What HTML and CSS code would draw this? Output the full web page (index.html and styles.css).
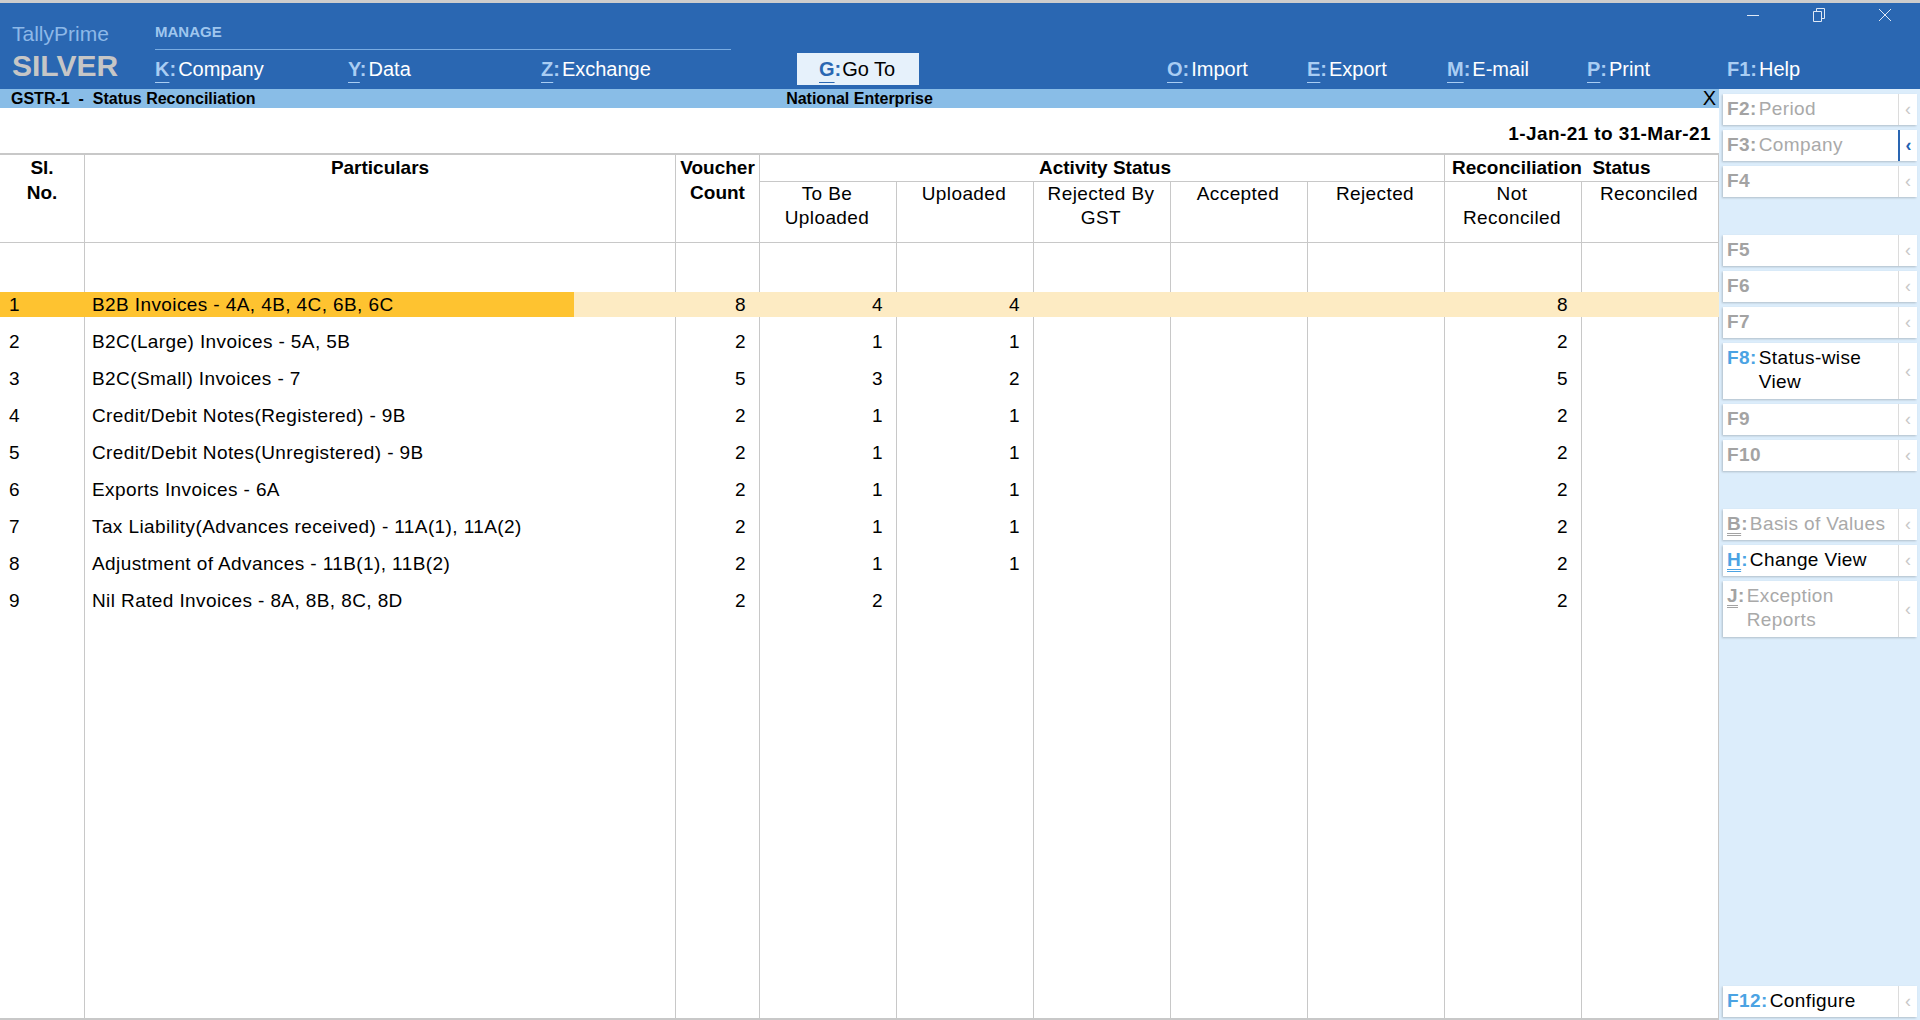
FILE: index.html
```html
<!DOCTYPE html>
<html>
<head>
<meta charset="utf-8">
<title>TallyPrime - GSTR-1 Status Reconciliation</title>
<link rel="stylesheet" href="styles.css">
</head>
<body>
<div class="app">
  <div class="chrome-top"></div>
  <header class="topbar">
    <div class="brand">
      <div class="product">TallyPrime</div>
      <div class="edition">SILVER</div>
    </div>
    <div class="nav">
      <div class="nav-top">
        <div class="manage">MANAGE</div>
        <div class="winctl">
          <span class="wc"><svg width="14" height="14" viewBox="0 0 14 14"><path d="M1 7.5H13" stroke="#dfe9f6" stroke-width="1" fill="none"/></svg></span>
          <span class="wc"><svg width="14" height="14" viewBox="0 0 14 14"><path d="M4.5 3.5V0.5H12.5V10.5H9.5M1.5 3.5H9.5V13.5H1.5Z" stroke="#dfe9f6" stroke-width="1" fill="none"/></svg></span>
          <span class="wc"><svg width="14" height="14" viewBox="0 0 14 14"><path d="M1 1L13 13M13 1L1 13" stroke="#dfe9f6" stroke-width="1" fill="none"/></svg></span>
        </div>
      </div>
      <div class="menu">
        <div class="mi w193"><span class="k"><u>K</u>:</span>Company</div>
        <div class="mi w193"><span class="k"><u>Y</u>:</span>Data</div>
        <div class="mi w193"><span class="k"><u>Z</u>:</span>Exchange</div>
        <div class="mi goto"><span class="k"><u>G</u>:</span>Go To</div>
        <div class="mi w140 rfirst"><span class="k"><u>O</u>:</span>Import</div>
        <div class="mi w140"><span class="k"><u>E</u>:</span>Export</div>
        <div class="mi w140"><span class="k"><u>M</u>:</span>E-mail</div>
        <div class="mi w140"><span class="k"><u>P</u>:</span>Print</div>
        <div class="mi"><span class="k">F1:</span>Help</div>
      </div>
    </div>
  </header>

  <div class="content">
    <main class="main">
      <div class="titlebar">
        <span class="t-left">GSTR-1 &nbsp;- &nbsp;Status Reconciliation</span>
        <span class="t-mid">National Enterprise</span>
        <span class="t-close">X</span>
      </div>
      <div class="period">1-Jan-21 to 31-Mar-21</div>

      <div class="table">
        <div class="thead">
          <div class="h hb span2">Sl.<br>No.</div>
          <div class="h hb span2">Particulars</div>
          <div class="h hb span2">Voucher<br>Count</div>
          <div class="h grp">Activity Status</div>
          <div class="h grp grp2">Reconciliation  Status</div>
          <div class="h sub">To Be<br>Uploaded</div>
          <div class="h sub">Uploaded</div>
          <div class="h sub">Rejected By<br>GST</div>
          <div class="h sub">Accepted</div>
          <div class="h sub">Rejected</div>
          <div class="h sub">Not<br>Reconciled</div>
          <div class="h sub">Reconciled</div>
        </div>

        <div class="tbody">
          <div class="row spacer">
            <div class="c"></div><div class="c"></div><div class="c"></div><div class="c"></div><div class="c"></div>
            <div class="c"></div><div class="c"></div><div class="c"></div><div class="c"></div><div class="c"></div>
          </div>

          <div class="row sel">
            <div class="c sl"><div class="v">1</div></div>
            <div class="c pt"><div class="v">B2B Invoices - 4A, 4B, 4C, 6B, 6C</div></div>
            <div class="c num"><div class="v">8</div></div>
            <div class="c num"><div class="v">4</div></div>
            <div class="c num"><div class="v">4</div></div>
            <div class="c num"><div class="v"></div></div>
            <div class="c num"><div class="v"></div></div>
            <div class="c num"><div class="v"></div></div>
            <div class="c num"><div class="v">8</div></div>
            <div class="c num"><div class="v"></div></div>
          </div>

          <div class="row">
            <div class="c sl"><div class="v">2</div></div>
            <div class="c pt"><div class="v">B2C(Large) Invoices - 5A, 5B</div></div>
            <div class="c num"><div class="v">2</div></div>
            <div class="c num"><div class="v">1</div></div>
            <div class="c num"><div class="v">1</div></div>
            <div class="c num"></div><div class="c num"></div><div class="c num"></div>
            <div class="c num"><div class="v">2</div></div>
            <div class="c num"></div>
          </div>

          <div class="row">
            <div class="c sl"><div class="v">3</div></div>
            <div class="c pt"><div class="v">B2C(Small) Invoices - 7</div></div>
            <div class="c num"><div class="v">5</div></div>
            <div class="c num"><div class="v">3</div></div>
            <div class="c num"><div class="v">2</div></div>
            <div class="c num"></div><div class="c num"></div><div class="c num"></div>
            <div class="c num"><div class="v">5</div></div>
            <div class="c num"></div>
          </div>

          <div class="row">
            <div class="c sl"><div class="v">4</div></div>
            <div class="c pt"><div class="v">Credit/Debit Notes(Registered) - 9B</div></div>
            <div class="c num"><div class="v">2</div></div>
            <div class="c num"><div class="v">1</div></div>
            <div class="c num"><div class="v">1</div></div>
            <div class="c num"></div><div class="c num"></div><div class="c num"></div>
            <div class="c num"><div class="v">2</div></div>
            <div class="c num"></div>
          </div>

          <div class="row">
            <div class="c sl"><div class="v">5</div></div>
            <div class="c pt"><div class="v">Credit/Debit Notes(Unregistered) - 9B</div></div>
            <div class="c num"><div class="v">2</div></div>
            <div class="c num"><div class="v">1</div></div>
            <div class="c num"><div class="v">1</div></div>
            <div class="c num"></div><div class="c num"></div><div class="c num"></div>
            <div class="c num"><div class="v">2</div></div>
            <div class="c num"></div>
          </div>

          <div class="row">
            <div class="c sl"><div class="v">6</div></div>
            <div class="c pt"><div class="v">Exports Invoices - 6A</div></div>
            <div class="c num"><div class="v">2</div></div>
            <div class="c num"><div class="v">1</div></div>
            <div class="c num"><div class="v">1</div></div>
            <div class="c num"></div><div class="c num"></div><div class="c num"></div>
            <div class="c num"><div class="v">2</div></div>
            <div class="c num"></div>
          </div>

          <div class="row">
            <div class="c sl"><div class="v">7</div></div>
            <div class="c pt"><div class="v">Tax Liability(Advances received) - 11A(1), 11A(2)</div></div>
            <div class="c num"><div class="v">2</div></div>
            <div class="c num"><div class="v">1</div></div>
            <div class="c num"><div class="v">1</div></div>
            <div class="c num"></div><div class="c num"></div><div class="c num"></div>
            <div class="c num"><div class="v">2</div></div>
            <div class="c num"></div>
          </div>

          <div class="row">
            <div class="c sl"><div class="v">8</div></div>
            <div class="c pt"><div class="v">Adjustment of Advances - 11B(1), 11B(2)</div></div>
            <div class="c num"><div class="v">2</div></div>
            <div class="c num"><div class="v">1</div></div>
            <div class="c num"><div class="v">1</div></div>
            <div class="c num"></div><div class="c num"></div><div class="c num"></div>
            <div class="c num"><div class="v">2</div></div>
            <div class="c num"></div>
          </div>

          <div class="row">
            <div class="c sl"><div class="v">9</div></div>
            <div class="c pt"><div class="v">Nil Rated Invoices - 8A, 8B, 8C, 8D</div></div>
            <div class="c num"><div class="v">2</div></div>
            <div class="c num"><div class="v">2</div></div>
            <div class="c num"></div>
            <div class="c num"></div><div class="c num"></div><div class="c num"></div>
            <div class="c num"><div class="v">2</div></div>
            <div class="c num"></div>
          </div>

          <div class="row filler">
            <div class="c"></div><div class="c"></div><div class="c"></div><div class="c"></div><div class="c"></div>
            <div class="c"></div><div class="c"></div><div class="c"></div><div class="c"></div><div class="c"></div>
          </div>
        </div>
      </div>
    </main>

    <aside class="side">
      <div class="btn"><div class="lbl"><span class="key">F2:</span><span class="txt">Period</span></div><div class="arr">‹</div></div>
      <div class="btn cur"><div class="lbl"><span class="key">F3:</span><span class="txt">Company</span></div><div class="arr">‹</div></div>
      <div class="btn"><div class="lbl"><span class="key">F4</span></div><div class="arr">‹</div></div>
      <div class="spc"></div>
      <div class="btn"><div class="lbl"><span class="key">F5</span></div><div class="arr">‹</div></div>
      <div class="btn"><div class="lbl"><span class="key">F6</span></div><div class="arr">‹</div></div>
      <div class="btn"><div class="lbl"><span class="key">F7</span></div><div class="arr">‹</div></div>
      <div class="btn two on"><div class="lbl"><span class="key">F8:</span><span class="txt">Status-wise<br>View</span></div><div class="arr">‹</div></div>
      <div class="btn"><div class="lbl"><span class="key">F9</span></div><div class="arr">‹</div></div>
      <div class="btn"><div class="lbl"><span class="key">F10</span></div><div class="arr">‹</div></div>
      <div class="spc"></div>
      <div class="btn"><div class="lbl"><span class="key"><u>B</u>:</span><span class="txt">Basis of Values</span></div><div class="arr">‹</div></div>
      <div class="btn on"><div class="lbl"><span class="key"><u>H</u>:</span><span class="txt">Change View</span></div><div class="arr">‹</div></div>
      <div class="btn two"><div class="lbl"><span class="key"><u>J</u>:</span><span class="txt">Exception<br>Reports</span></div><div class="arr">‹</div></div>
      <div class="btn on last"><div class="lbl"><span class="key">F12:</span><span class="txt">Configure</span></div><div class="arr">‹</div></div>
    </aside>
  </div>
</div>
</body>
</html>
```

FILE: styles.css
```css
* { box-sizing: border-box; }
html, body { margin: 0; padding: 0; }
body {
  width: 1920px;
  height: 1020px;
  overflow: hidden;
  background: #ffffff;
  color: #000000;
  font-family: "Liberation Sans", Arial, sans-serif;
}
.app { display: flex; flex-direction: column; height: 1020px; }

/* ---------- window top / header ---------- */
.chrome-top { height: 3px; background: #cdcdcd; flex: none; }
.topbar { height: 86px; flex: none; background: #2a67b2; display: flex; }

.brand { width: 155px; padding-left: 12px; flex: none; }
.product { margin-top: 19px; font-size: 21px; line-height: 24px; color: #8db8e8; }
.edition { margin-top: 5px; font-size: 30px; line-height: 30px; font-weight: bold; color: #c6c6c6; }

.nav { flex: 1; display: flex; flex-direction: column; }
.nav-top { display: flex; align-items: flex-start; }
.manage {
  width: 576px;
  height: 27px;
  margin-top: 20px;
  font-size: 15px;
  line-height: 18px;
  font-weight: bold;
  color: #9fc6ee;
  border-bottom: 1px solid #79ace2;
}
.winctl { margin-left: auto; display: flex; height: 24px; padding-right: 2px; }
.wc { width: 66px; display: flex; align-items: center; justify-content: center; }
.wc svg { display: block; }

.menu { display: flex; margin-top: 3px; height: 32px; font-size: 20px; color: #ffffff; }
.mi { line-height: 32px; white-space: nowrap; flex: none; }
.mi .k { font-weight: bold; color: #a9cdf3; margin-right: 2px; }
.mi .k u { text-decoration: underline; text-underline-offset: 6px; text-decoration-thickness: 1px; }
.w193 { width: 193px; }
.w140 { width: 140px; }
.goto { margin-left: 63px; width: 122px; padding-left: 22px; background: #e6f1fb; color: #000000; }
.goto .k { color: #2a67b2; margin-right: 1px; }
.rfirst { margin-left: 248px; }

/* ---------- content ---------- */
.content { flex: 1; display: flex; min-height: 0; }
.main { width: 1719px; flex: none; display: flex; flex-direction: column; min-height: 0; }

.titlebar {
  height: 19px;
  flex: none;
  background: #89bde7;
  display: grid;
  grid-template-columns: 1fr auto 1fr;
  align-items: center;
  font-size: 16px;
  line-height: 19px;
  font-weight: bold;
}
.t-left { padding-left: 11px; white-space: nowrap; }
.t-mid { white-space: nowrap; }
.t-close { justify-self: end; padding-right: 3px; font-weight: normal; font-size: 20px; }

.period {
  height: 45px;
  flex: none;
  padding: 14px 8px 0 0;
  text-align: right;
  font-size: 19px;
  line-height: 24px;
  font-weight: bold;
  letter-spacing: 0.4px;
}

/* ---------- table ---------- */
.table {
  flex: 1;
  min-height: 0;
  display: flex;
  flex-direction: column;
  border-top: 2px solid #c8c8c8;
  border-bottom: 2px solid #c8c8c8;
}
.thead {
  flex: none;
  display: grid;
  grid-template-columns: 85px 591px 84px repeat(7, 137px);
  grid-template-rows: 27px 60px;
  border-bottom: 1px solid #c8c8c8;
  font-size: 19px;
}
.h { border-right: 1px solid #c8c8c8; text-align: center; white-space: nowrap; }
.hb { font-weight: bold; line-height: 25px; }
.span2 { grid-row: 1 / 3; }
.grp { grid-row: 1; grid-column: 4 / 9; font-weight: bold; line-height: 26px; border-bottom: 1px solid #c8c8c8; padding-left: 6px; }
.grp2 { grid-column: 9 / 11; text-align: left; padding-left: 7px; white-space: pre; }
.sub { grid-row: 2; line-height: 24px; letter-spacing: 0.4px; padding-right: 2px; }

.tbody { flex: 1; min-height: 0; display: flex; flex-direction: column; }
.row {
  flex: none;
  height: 37px;
  display: grid;
  grid-template-columns: 85px 591px 84px repeat(7, 137px);
  font-size: 19px;
  letter-spacing: 0.4px;
}
.row.spacer { height: 43px; }
.row.filler { flex: 1; height: auto; }
.c { border-right: 1px solid #c8c8c8; min-width: 0; }
.c .v { margin-top: 6px; height: 25px; line-height: 25px; white-space: nowrap; }
.c.sl .v { padding-left: 9px; }
.c.pt .v { padding-left: 7px; }
.c.num .v { text-align: right; padding-right: 13px; }

.sel .c .v { background: #fdebc3; margin-right: -1px; }
.sel .c.num .v { padding-right: 14px; }
.sel .c.sl .v { background: #fec330; }
.sel .c.pt .v { background: linear-gradient(to right, #fec330 0, #fec330 489px, #fdebc3 489px); }

/* ---------- right button bar ---------- */
.side {
  width: 201px;
  flex: none;
  background: #dcedfb;
  display: flex;
  flex-direction: column;
  gap: 5px;
  padding: 5px 3px 3px 4px;
}
.btn {
  flex: none;
  height: 31px;
  display: flex;
  background: #ffffff;
  box-shadow: -1px 1px 2px rgba(0, 0, 0, 0.2);
}
.btn.two { height: 56px; }
.btn .lbl {
  flex: 1;
  display: flex;
  align-items: flex-start;
  padding: 3px 0 0 4px;
  font-size: 19px;
  line-height: 24px;
  letter-spacing: 0.4px;
  color: #a9a9a9;
  white-space: nowrap;
}
.btn .key { font-weight: bold; color: #a3a3a3; margin-right: 2px; }
.btn .key u { text-decoration: underline double; text-underline-offset: 3px; text-decoration-thickness: 1px; }
.btn .arr {
  width: 19px;
  flex: none;
  border-left: 1px solid #dcdcdc;
  display: flex;
  align-items: center;
  justify-content: center;
  color: #c8c8c8;
  font-size: 18px;
}
.btn.on .key { color: #4ba3e3; }
.btn.on .lbl { color: #000000; }
.btn.cur .arr { border-left: 2px solid #2a66b2; color: #2160b0; font-weight: bold; }
.spc { flex: none; height: 28px; }
.btn.last { margin-top: auto; }
```
